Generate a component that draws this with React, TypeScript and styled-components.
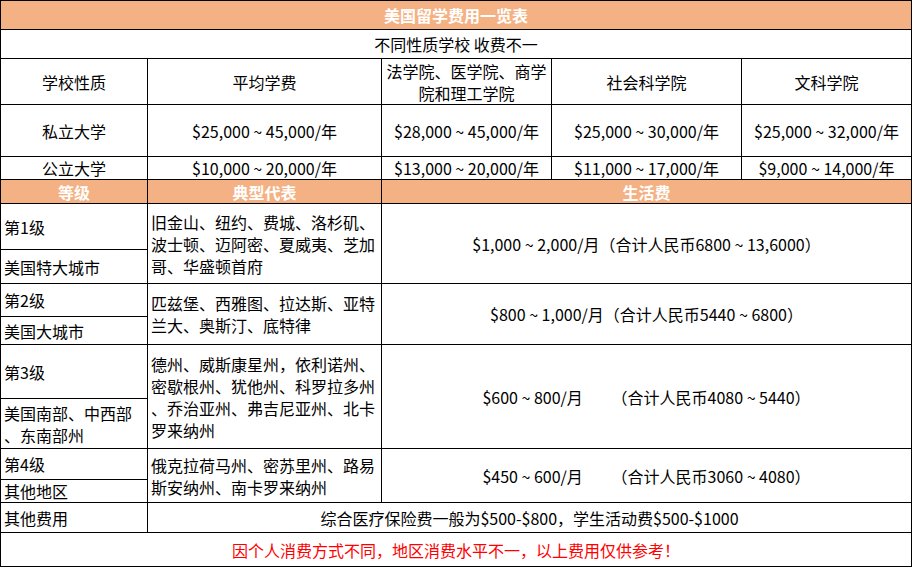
import React from "react";
import styled, { createGlobalStyle } from "styled-components";

const Global = createGlobalStyle`
  html, body { margin: 0; padding: 0; background: #fff; }
  body { font-family: "Noto Sans CJK SC", "Microsoft YaHei", sans-serif; }
`;

const Sheet = styled.table`
  width: 911px;
  border-collapse: collapse;
  table-layout: fixed;
  font-size: 16px;
  line-height: 22px;
  color: #000;
`;

const Col = styled.col<{ $w: number }>`
  width: ${(p) => p.$w}px;
`;

const Row = styled.tr<{ $h: number }>`
  height: ${(p) => p.$h}px;
`;

type Tone = "plain" | "head" | "alert";

const Cell = styled.td<{ $align?: "left" | "center"; $tone?: Tone }>`
  border: 1px solid #000;
  padding: 0 3px;
  vertical-align: middle;
  text-align: ${(p) => p.$align ?? "center"};
  white-space: pre;
  overflow: hidden;
  background: ${(p) => (p.$tone === "head" ? "#F4B183" : "#fff")};
  color: ${(p) => (p.$tone === "head" ? "#fff" : p.$tone === "alert" ? "#ff0000" : "#000")};
  font-weight: ${(p) => (p.$tone === "head" ? 700 : 400)};
`;

const tuition = [
  { name: "私立大学", h: 52, fees: ["$25,000 ~ 45,000/年", "$28,000 ~ 45,000/年", "$25,000 ~ 30,000/年", "$25,000 ~ 32,000/年"] },
  { name: "公立大学", h: 23, fees: ["$10,000 ~ 20,000/年", "$13,000 ~ 20,000/年", "$11,000 ~ 17,000/年", "$9,000 ~ 14,000/年"] },
];

const tiers = [
  {
    level: "第1级",
    area: "美国特大城市",
    h1: 46,
    h2: 34,
    cities: "旧金山、纽约、费城、洛杉矶、\n波士顿、迈阿密、夏威夷、芝加\n哥、华盛顿首府",
    cost: "$1,000 ~ 2,000/月（合计人民币6800 ~ 13,6000）",
  },
  {
    level: "第2级",
    area: "美国大城市",
    h1: 33,
    h2: 28,
    cities: "匹兹堡、西雅图、拉达斯、亚特\n兰大、奥斯汀、底特律",
    cost: "$800 ~ 1,000/月（合计人民币5440 ~ 6800）",
  },
  {
    level: "第3级",
    area: "美国南部、中西部\n、东南部州",
    h1: 54,
    h2: 50,
    cities: "德州、威斯康星州，依利诺州、\n密歇根州、犹他州、科罗拉多州\n、乔治亚州、弗吉尼亚州、北卡\n罗来纳州",
    cost: "$600 ~ 800/月        （合计人民币4080 ~ 5440）",
  },
  {
    level: "第4级",
    area: "其他地区",
    h1: 31,
    h2: 23,
    cities: "俄克拉荷马州、密苏里州、路易\n斯安纳州、南卡罗来纳州",
    cost: "$450 ~ 600/月        （合计人民币3060 ~ 4080）",
  },
];

export default function App() {
  return (
    <>
      <Global />
      <Sheet>
        <colgroup>
          <Col $w={147} />
          <Col $w={234} />
          <Col $w={170} />
          <Col $w={190} />
          <Col $w={170} />
        </colgroup>
        <tbody>
          <Row $h={29}>
            <Cell colSpan={5} $tone="head">美国留学费用一览表</Cell>
          </Row>
          <Row $h={29}>
            <Cell colSpan={5}>不同性质学校 收费不一</Cell>
          </Row>
          <Row $h={46}>
            <Cell>学校性质</Cell>
            <Cell>平均学费</Cell>
            <Cell>{"法学院、医学院、商学\n院和理工学院"}</Cell>
            <Cell>社会科学院</Cell>
            <Cell>文科学院</Cell>
          </Row>
          {tuition.map((t) => (
            <Row key={t.name} $h={t.h}>
              <Cell>{t.name}</Cell>
              {t.fees.map((f, i) => (
                <Cell key={i}>{f}</Cell>
              ))}
            </Row>
          ))}
          <Row $h={24}>
            <Cell $tone="head">等级</Cell>
            <Cell $tone="head">典型代表</Cell>
            <Cell colSpan={3} $tone="head">生活费</Cell>
          </Row>
          {tiers.map((t) => (
            <React.Fragment key={t.level}>
              <Row $h={t.h1}>
                <Cell $align="left">{t.level}</Cell>
                <Cell rowSpan={2} $align="left">{t.cities}</Cell>
                <Cell rowSpan={2} colSpan={3}>{t.cost}</Cell>
              </Row>
              <Row $h={t.h2}>
                <Cell $align="left">{t.area}</Cell>
              </Row>
            </React.Fragment>
          ))}
          <Row $h={30}>
            <Cell $align="left">其他费用</Cell>
            <Cell colSpan={4}>综合医疗保险费一般为$500-$800，学生活动费$500-$1000</Cell>
          </Row>
          <Row $h={34}>
            <Cell colSpan={5} $tone="alert">因个人消费方式不同，地区消费水平不一，以上费用仅供参考！</Cell>
          </Row>
        </tbody>
      </Sheet>
    </>
  );
}
